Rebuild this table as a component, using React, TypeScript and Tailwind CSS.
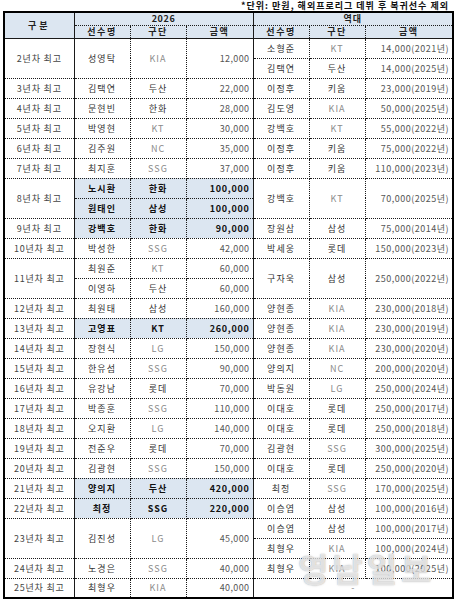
import React from "react";

type P = { n: string; t: string; a: string; hl?: boolean };
type G = { label: string; cur: P[]; past: P[] };

const groups: G[] = [
  { label: "2년차 최고", cur: [{ n: "성영탁", t: "KIA", a: "12,000" }], past: [{ n: "소형준", t: "KT", a: "14,000(2021년)" }, { n: "김택연", t: "두산", a: "14,000(2025년)" }] },
  { label: "3년차 최고", cur: [{ n: "김택연", t: "두산", a: "22,000" }], past: [{ n: "이정후", t: "키움", a: "23,000(2019년)" }] },
  { label: "4년차 최고", cur: [{ n: "문현빈", t: "한화", a: "28,000" }], past: [{ n: "김도영", t: "KIA", a: "50,000(2025년)" }] },
  { label: "5년차 최고", cur: [{ n: "박영현", t: "KT", a: "30,000" }], past: [{ n: "강백호", t: "KT", a: "55,000(2022년)" }] },
  { label: "6년차 최고", cur: [{ n: "김주원", t: "NC", a: "35,000" }], past: [{ n: "이정후", t: "키움", a: "75,000(2022년)" }] },
  { label: "7년차 최고", cur: [{ n: "최지훈", t: "SSG", a: "37,000" }], past: [{ n: "이정후", t: "키움", a: "110,000(2023년)" }] },
  { label: "8년차 최고", cur: [{ n: "노시환", t: "한화", a: "100,000", hl: true }, { n: "원태인", t: "삼성", a: "100,000", hl: true }], past: [{ n: "강백호", t: "KT", a: "70,000(2025년)" }] },
  { label: "9년차 최고", cur: [{ n: "강백호", t: "한화", a: "90,000", hl: true }], past: [{ n: "장원삼", t: "삼성", a: "75,000(2014년)" }] },
  { label: "10년차 최고", cur: [{ n: "박성한", t: "SSG", a: "42,000" }], past: [{ n: "박세웅", t: "롯데", a: "150,000(2023년)" }] },
  { label: "11년차 최고", cur: [{ n: "최원준", t: "KT", a: "60,000" }, { n: "이영하", t: "두산", a: "60,000" }], past: [{ n: "구자욱", t: "삼성", a: "250,000(2022년)" }] },
  { label: "12년차 최고", cur: [{ n: "최원태", t: "삼성", a: "160,000" }], past: [{ n: "양현종", t: "KIA", a: "230,000(2018년)" }] },
  { label: "13년차 최고", cur: [{ n: "고영표", t: "KT", a: "260,000", hl: true }], past: [{ n: "양현종", t: "KIA", a: "230,000(2019년)" }] },
  { label: "14년차 최고", cur: [{ n: "장현식", t: "LG", a: "150,000" }], past: [{ n: "양현종", t: "KIA", a: "230,000(2020년)" }] },
  { label: "15년차 최고", cur: [{ n: "한유섬", t: "SSG", a: "90,000" }], past: [{ n: "양의지", t: "NC", a: "200,000(2020년)" }] },
  { label: "16년차 최고", cur: [{ n: "유강남", t: "롯데", a: "70,000" }], past: [{ n: "박동원", t: "LG", a: "250,000(2024년)" }] },
  { label: "17년차 최고", cur: [{ n: "박종훈", t: "SSG", a: "110,000" }], past: [{ n: "이대호", t: "롯데", a: "250,000(2017년)" }] },
  { label: "18년차 최고", cur: [{ n: "오지환", t: "LG", a: "140,000" }], past: [{ n: "이대호", t: "롯데", a: "250,000(2018년)" }] },
  { label: "19년차 최고", cur: [{ n: "전준우", t: "롯데", a: "70,000" }], past: [{ n: "김광현", t: "SSG", a: "300,000(2025년)" }] },
  { label: "20년차 최고", cur: [{ n: "김광현", t: "SSG", a: "150,000" }], past: [{ n: "이대호", t: "롯데", a: "250,000(2020년)" }] },
  { label: "21년차 최고", cur: [{ n: "양의지", t: "두산", a: "420,000", hl: true }], past: [{ n: "최정", t: "SSG", a: "170,000(2025년)" }] },
  { label: "22년차 최고", cur: [{ n: "최정", t: "SSG", a: "220,000", hl: true }], past: [{ n: "이승엽", t: "삼성", a: "100,000(2016년)" }] },
  { label: "23년차 최고", cur: [{ n: "김진성", t: "LG", a: "45,000" }], past: [{ n: "이승엽", t: "삼성", a: "100,000(2017년)" }, { n: "최형우", t: "KIA", a: "100,000(2024년)" }] },
  { label: "24년차 최고", cur: [{ n: "노경은", t: "SSG", a: "40,000" }], past: [{ n: "최형우", t: "KIA", a: "100,000(2025년)" }] },
  { label: "25년차 최고", cur: [{ n: "최형우", t: "KIA", a: "40,000" }], past: [] },
];

const base =
  "border border-dotted border-[#1a1a1a] px-[3px] align-middle whitespace-nowrap leading-none";
const latin = (s: string) => /^[A-Z]+$/.test(s);

function teamCls(t: string) {
  return latin(t) ? "text-[#8a8a8a] tracking-[1px]" : "text-[#333] tracking-[1px]";
}

export default function App() {
  return (
    <div className="relative w-[454px] h-[602px] bg-white font-['Noto_Sans_CJK_KR','Noto_Sans',sans-serif] text-[9px] text-[#333]">
      <div className="h-[11px] flex justify-end items-start pr-[5px] text-[9px] leading-[11px] font-bold text-[#111] tracking-[1px]">
        *단위: 만원, 해외프로리그 데뷔 후 복귀선수 제외
      </div>
      <table className="ml-[3px] w-[449px] table-fixed border-collapse border-2 border-solid border-black">
        <colgroup>
          <col className="w-[70px]" />
          <col className="w-[56px]" />
          <col className="w-[56px]" />
          <col className="w-[67px]" />
          <col className="w-[56px]" />
          <col className="w-[56px]" />
          <col className="w-[88px]" />
        </colgroup>
        <thead>
          <tr className="h-[13px] bg-[#dce6f1]">
            <th rowSpan={2} className={`${base} text-center font-bold text-[#222] tracking-[3px] [border-right-style:solid] [border-bottom-style:solid]`}>
              구분
            </th>
            <th colSpan={3} className={`${base} text-center font-bold text-[#222] tracking-[0.6px] [border-right-style:solid]`}>
              2026
            </th>
            <th colSpan={3} className={`${base} text-center font-bold text-[#222] tracking-[1px]`}>
              역대
            </th>
          </tr>
          <tr className="h-[13px] bg-[#dce6f1]">
            {["선수명", "구단", "금액", "선수명", "구단", "금액"].map((h, i) => (
              <th
                key={i}
                className={`${base} text-center font-bold text-[#222] tracking-[1.5px] [border-bottom-style:solid] ${i === 2 ? "[border-right-style:solid]" : ""}`}
              >
                {h}
              </th>
            ))}
          </tr>
        </thead>
        <tbody>
          {groups.map((g, gi) => {
            const span = Math.max(g.cur.length, g.past.length, 1);
            const out: React.ReactNode[] = [];
            for (let i = 0; i < span; i++) {
              const cells: React.ReactNode[] = [];
              if (i === 0) {
                cells.push(
                  <td key="l" rowSpan={span} className={`${base} text-center tracking-[0.8px] text-[#444] [border-right-style:solid]`}>
                    {g.label}
                  </td>
                );
              }
              const curIdx = g.cur.length === span ? i : i === 0 ? 0 : -1;
              if (curIdx >= 0) {
                const c = g.cur[curIdx];
                const rs = g.cur.length === span ? 1 : span;
                const hl = c.hl ? "bg-[#dce6f1] font-bold text-[#111]" : "";
                cells.push(
                  <td key="cn" rowSpan={rs} className={`${base} text-center tracking-[1px] ${hl}`}>
                    {c.n}
                  </td>,
                  <td key="ct" rowSpan={rs} className={`${base} text-center ${c.hl ? "bg-[#dce6f1] font-bold text-[#111] tracking-[1px]" : teamCls(c.t)}`}>
                    {c.t}
                  </td>,
                  <td key="ca" rowSpan={rs} className={`${base} text-right ${c.hl ? "bg-[#dce6f1] font-bold text-[#111] tracking-[0.7px]" : "text-[#555] tracking-[0.4px]"} [border-right-style:solid]`}>
                    {c.a}
                  </td>
                );
              }
              if (g.past.length === 0) {
                if (i === 0) {
                  cells.push(
                    <td key="pd" rowSpan={span} colSpan={3} className={`${base} text-center text-[#888]`}>
                      -
                    </td>
                  );
                }
              } else {
                const pIdx = g.past.length === span ? i : i === 0 ? 0 : -1;
                if (pIdx >= 0) {
                  const p = g.past[pIdx];
                  const rs = g.past.length === span ? 1 : span;
                  cells.push(
                    <td key="pn" rowSpan={rs} className={`${base} text-center tracking-[1px]`}>
                      {p.n}
                    </td>,
                    <td key="pt" rowSpan={rs} className={`${base} text-center ${teamCls(p.t)}`}>
                      {p.t}
                    </td>,
                    <td key="pa" rowSpan={rs} className={`${base} text-right tracking-[0.5px] text-[#555]`}>
                      {p.a}
                    </td>
                  );
                }
              }
              out.push(
                <tr key={`${gi}-${i}`} className="h-[20px]">
                  {cells}
                </tr>
              );
            }
            return out;
          })}
        </tbody>
      </table>
      <div className="absolute left-[298px] top-[552px] text-[33px] font-bold leading-none tracking-[4px] text-[rgba(255,255,255,0.7)] [text-shadow:0_0_1px_rgba(0,0,0,0.3),0_0_3px_rgba(0,0,0,0.12)] pointer-events-none">
        영남일보
      </div>
    </div>
  );
}
